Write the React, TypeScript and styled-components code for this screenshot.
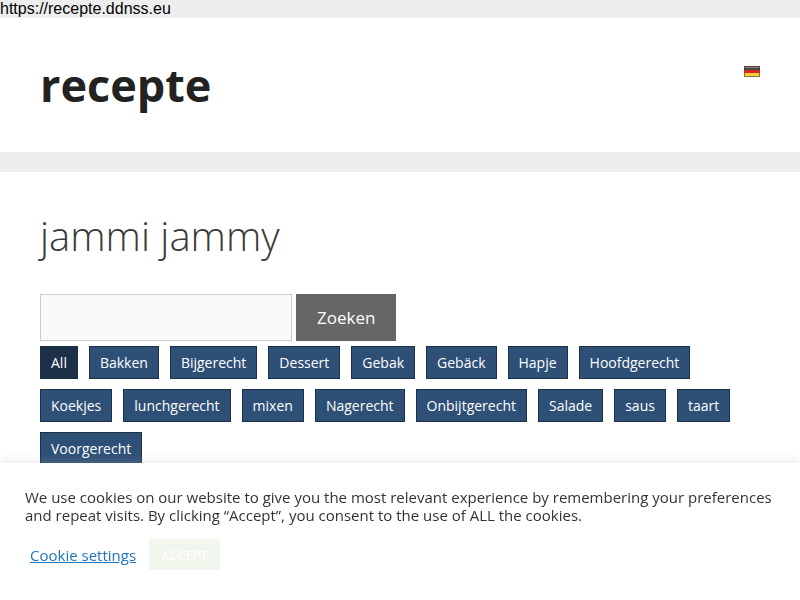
import React from "react";
import styled, { createGlobalStyle } from "styled-components";

const Global = createGlobalStyle`
  *, *::before, *::after { box-sizing: border-box; }
  body { margin: 0; background: #eee; color: #3a3a3a; font-family: "Open Sans", sans-serif; font-size: 17px; line-height: 1.5; overflow: hidden; }
`;
const Address = styled.div`
  font-family: "Liberation Sans", Arial, sans-serif;
  font-size: 16px; line-height: 18px; color: #000;
`;
const Header = styled.header`
  display: flex; justify-content: space-between; align-items: flex-start;
  padding: 40px; background: #fff;
`;
const SiteTitle = styled.p`
  margin: 0; font-size: 45px; font-weight: 700; line-height: 54px;
  a { color: #222; text-decoration: none; }
`;
const Language = styled.a`
  display: block; margin-top: 8px; line-height: 0;
`;
const Main = styled.main`
  margin-top: 20px; padding: 40px; background: #fff; min-height: 428px;
`;
const PageTitle = styled.h1`
  margin: 0 0 34px; font-size: 40px; font-weight: 300; line-height: 48px;
`;
const SearchForm = styled.form`
  display: flex; gap: 4px; margin-bottom: 5px;
`;
const SearchInput = styled.input`
  width: 252px; height: 47px; padding: 10px 15px; border: 1px solid #ccc; border-radius: 0;
  background: #fafafa; color: #666; font: inherit;
`;
const SearchButton = styled.button`
  height: 47px; padding: 0 21px; border: 0; background: #666; color: #fff; font: inherit;
`;
const Filters = styled.nav`
  display: flex; flex-wrap: wrap; gap: 10px 11px;
`;
const Filter = styled.button<{ $active?: boolean }>`
  height: 33px; padding: 0 10px; border: 1px solid #1c3048;
  background: ${(p) => (p.$active ? "#1c3048" : "#2e5077")};
  color: #fff; font: 14px/20px "Open Sans", sans-serif;
`;
const CookieBar = styled.aside`
  position: fixed; left: 0; right: 0; bottom: 0; min-height: 137px;
  padding: 25px; background: #fff; color: #333;
  box-shadow: 0 -1px 10px rgba(172, 171, 171, 0.3);
  font-size: 15px; line-height: 18px;
`;
const CookieText = styled.p`margin: 0;`;
const CookieActions = styled.div`
  display: flex; align-items: center; gap: 13px; margin: 15px 0 0 5px;
`;
const Settings = styled.a`color: #1e73be;`;
const Accept = styled.button`
  height: 31px; padding: 0 12px; border: 0; background: #f2f7ee; color: #fff;
  font: 13px/18px "Open Sans", sans-serif;
`;

const categories = ["All", "Bakken", "Bijgerecht", "Dessert", "Gebak", "Gebäck", "Hapje", "Hoofdgerecht", "Koekjes", "lunchgerecht", "mixen", "Nagerecht", "Onbijtgerecht", "Salade", "saus", "taart", "Voorgerecht"];

function GermanFlag() {
  return (
    <svg width="16" height="11" viewBox="0 0 16 11" shapeRendering="crispEdges" aria-hidden="true">
      <rect width="16" height="4" fill="#4a4434" />
      <rect y="4" width="16" height="3" fill="#84402a" />
      <rect y="7" width="16" height="4" fill="#85702c" />
      <rect x="1" y="1" width="14" height="1" fill="#8a8683" />
      <rect x="1" y="2" width="14" height="2" fill="#4a4646" />
      <rect x="1" y="4" width="14" height="3" fill="#e5231c" />
      <rect x="1" y="7" width="14" height="3" fill="#f8ce3c" />
    </svg>
  );
}

export default function App() {
  return (
    <>
      <Global />
      <Address>https://recepte.ddnss.eu</Address>
      <Header>
        <SiteTitle><a href="#home">recepte</a></SiteTitle>
        <Language href="#de" aria-label="Deutsch"><GermanFlag /></Language>
      </Header>
      <Main>
        <PageTitle>jammi jammy</PageTitle>
        <SearchForm onSubmit={(e) => e.preventDefault()}>
          <SearchInput type="search" aria-label="Zoeken" />
          <SearchButton type="submit">Zoeken</SearchButton>
        </SearchForm>
        <Filters aria-label="Categories">
          {categories.map((c, i) => (
            <Filter key={c} type="button" $active={i === 0}>{c}</Filter>
          ))}
        </Filters>
      </Main>
      <CookieBar>
        <CookieText>
          We use cookies on our website to give you the most relevant experience by remembering your preferences and repeat visits. By clicking “Accept”, you consent to the use of ALL the cookies.
        </CookieText>
        <CookieActions>
          <Settings href="#cookies">Cookie settings</Settings>
          <Accept type="button">ACCEPT</Accept>
        </CookieActions>
      </CookieBar>
    </>
  );
}
